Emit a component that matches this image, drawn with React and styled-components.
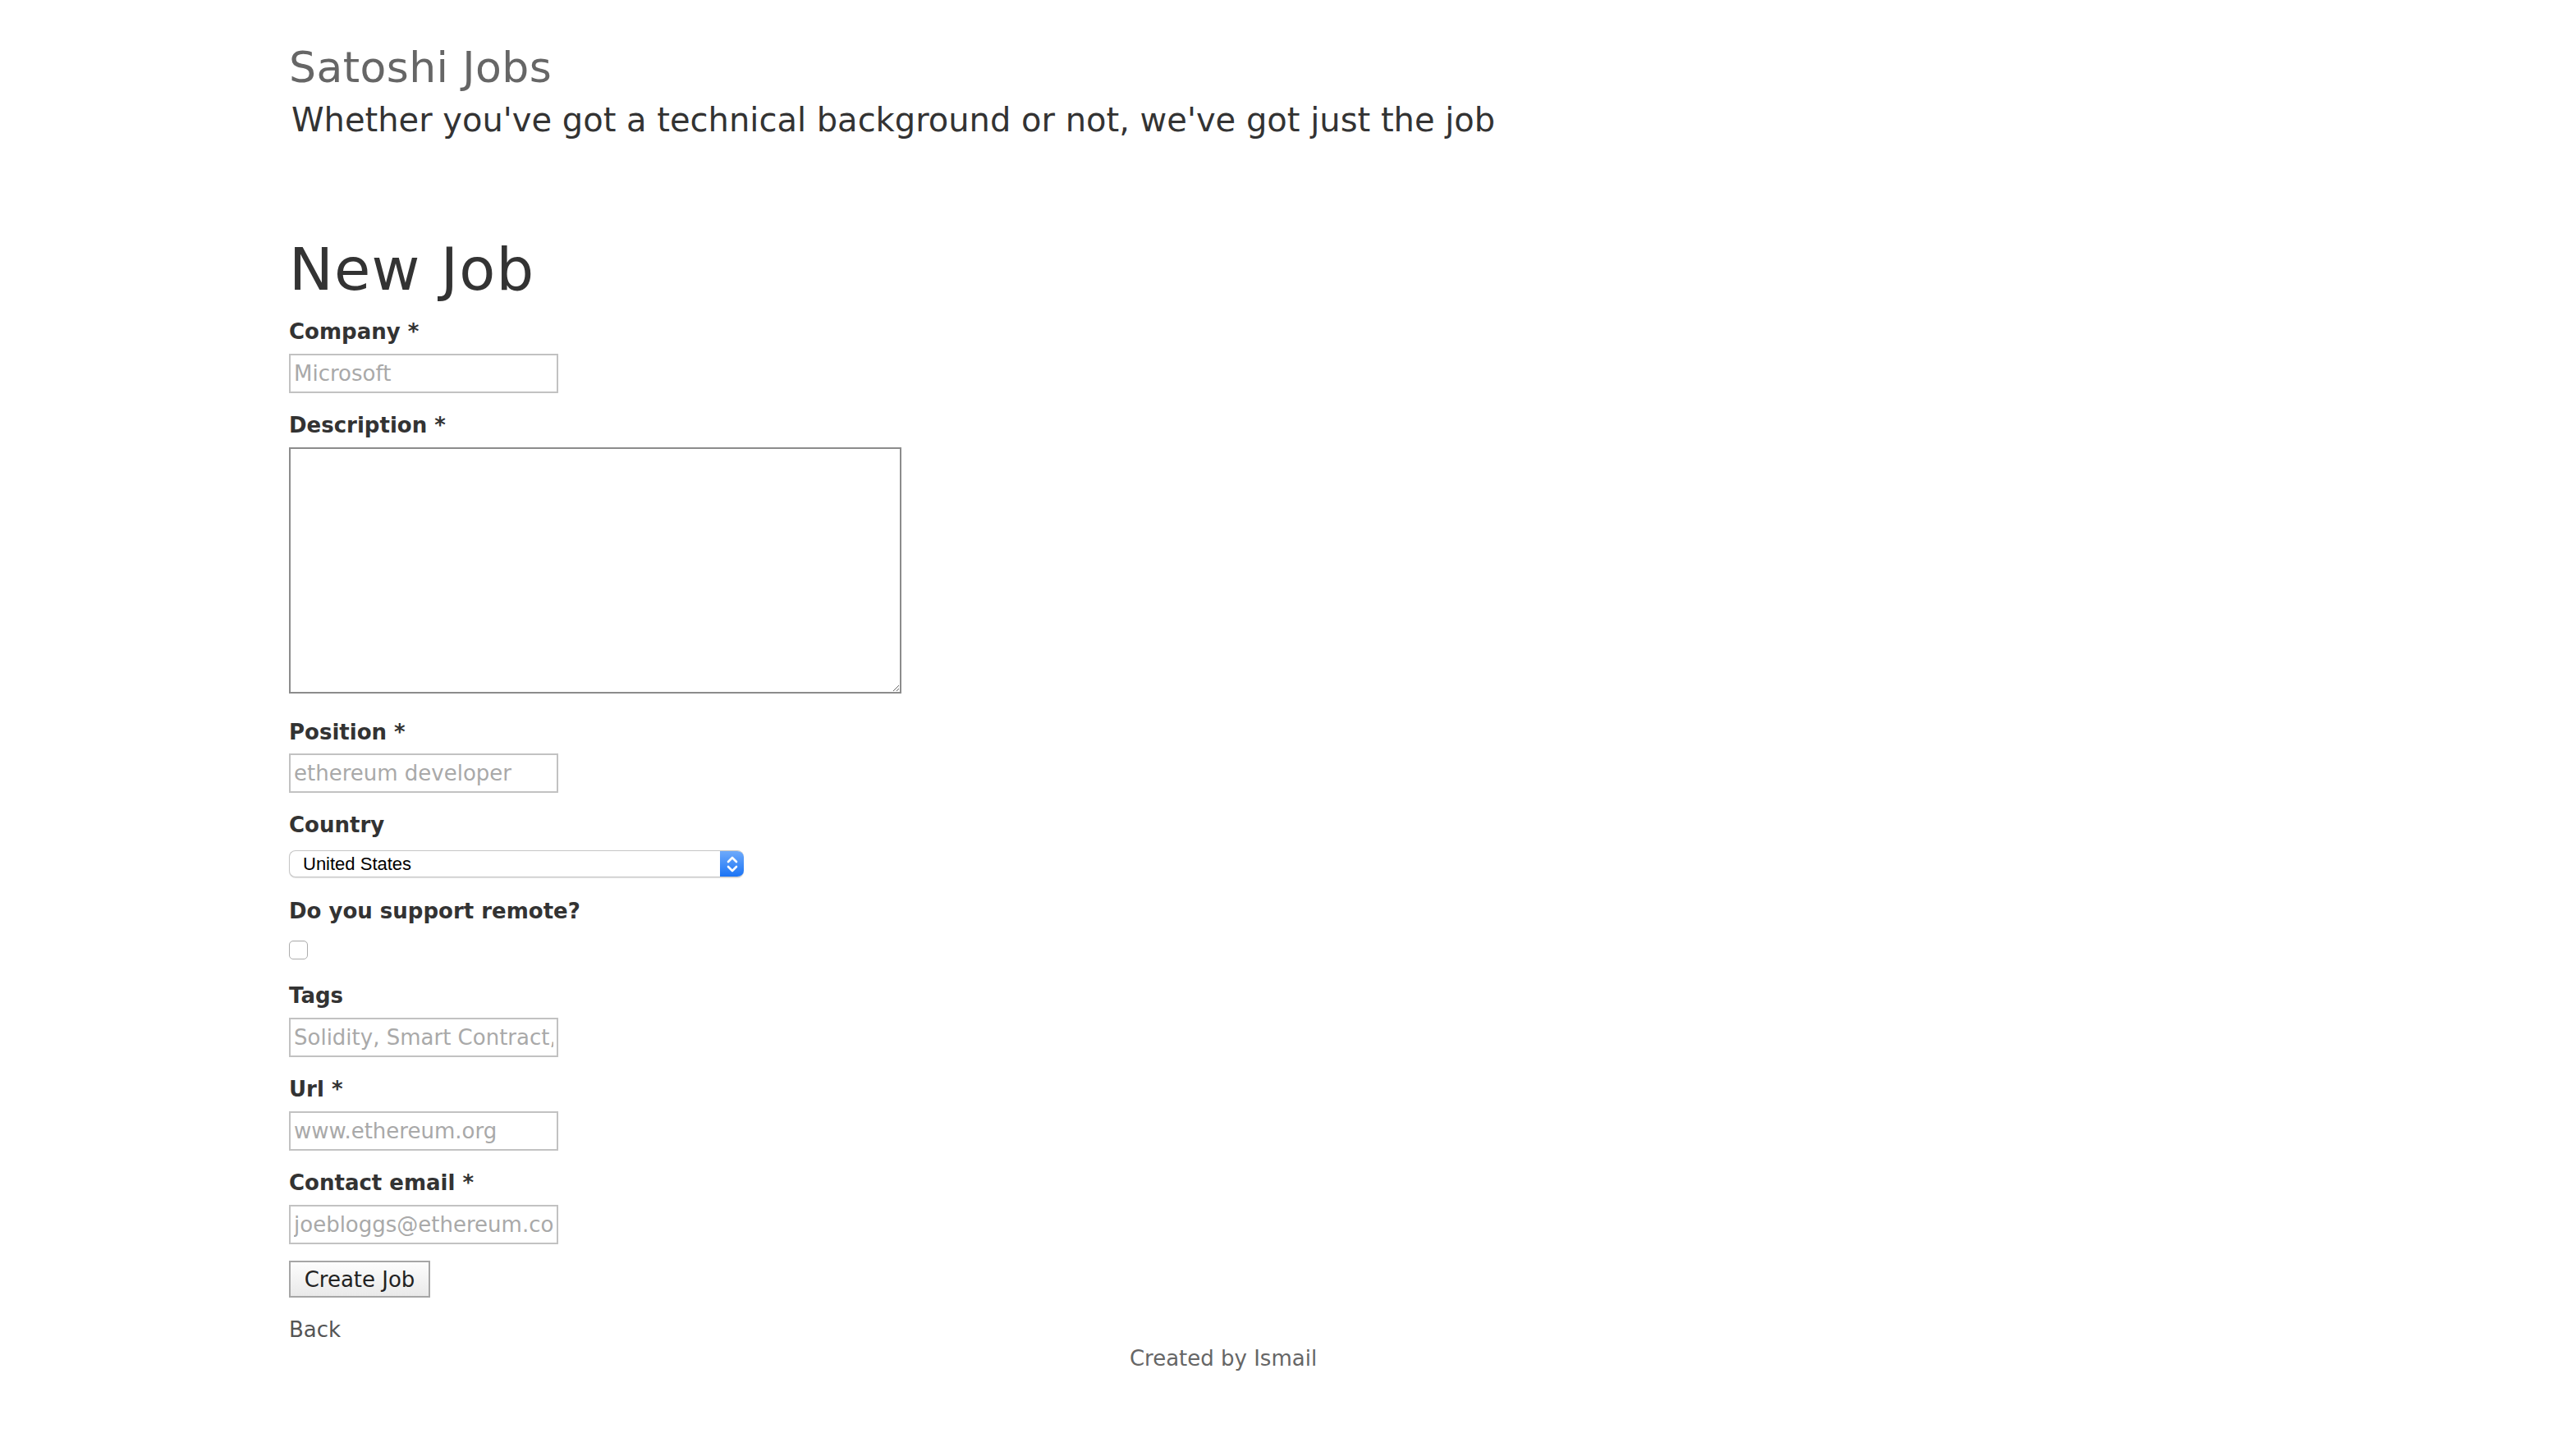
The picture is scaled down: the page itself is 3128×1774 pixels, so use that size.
import React from 'react'
import styled, { createGlobalStyle } from 'styled-components'

const GlobalStyle = createGlobalStyle`
  html, body {
    margin: 0;
    padding: 0;
    background: #fff;
  }
  body {
    font-family: "DejaVu Sans", Verdana, sans-serif;
    color: #333;
  }
  * { box-sizing: border-box; }
`

const Page = styled.div`
  padding: 52px 0 80px 352px;
`

const Brand = styled.h2`
  margin: 0;
  font-size: 52px;
  line-height: 60px;
  font-weight: normal;
  letter-spacing: 0.4px;
  color: #666;
`

const Tagline = styled.p`
  margin: 12px 0 0 3px;
  font-size: 40px;
  line-height: 44px;
  color: #333;
`

const Heading = styled.h1`
  margin: 120px 0 18px;
  font-size: 72px;
  line-height: 80px;
  font-weight: normal;
  letter-spacing: 1.2px;
  color: #333;
`

const Field = styled.div`
  margin-bottom: ${p => p.$after}px;
`

const Label = styled.label`
  display: block;
  font-size: 26px;
  line-height: 36px;
  font-weight: bold;
  color: #333;
  margin-bottom: ${p => p.$gap || 9}px;
`

const TextInput = styled.input`
  display: block;
  width: 328px;
  height: 48px;
  border: 2px solid #c2c2c2;
  padding: 0 4px;
  font-family: "DejaVu Sans", Verdana, sans-serif;
  font-size: 26px;
  color: #333;
  background: #fff;
  outline: none;
  &::placeholder { color: #a9a9a9; }
`

const TextArea = styled.textarea`
  display: block;
  width: 746px;
  height: 300px;
  border: 2px solid #8c8c8c;
  padding: 4px;
  font-family: "DejaVu Sans", Verdana, sans-serif;
  font-size: 26px;
  background: #fff;
  outline: none;
`

const SelectBox = styled.div`
  display: flex;
  align-items: stretch;
  width: 554px;
  height: 33px;
  border: 1px solid #c6c6c6;
  border-right: none;
  border-radius: 8px;
  background: #fff;
  box-shadow: 0 1px 1px rgba(0, 0, 0, 0.12);
  overflow: hidden;
`

const SelectValue = styled.span`
  flex: 1;
  padding-left: 16px;
  font-family: "Liberation Sans", Arial, sans-serif;
  font-size: 22px;
  line-height: 31px;
  color: #000;
`

const SelectArrow = styled.span`
  display: flex;
  align-items: center;
  justify-content: center;
  width: 29px;
  background: linear-gradient(#6eaafb, #1b74f5);
`

const Check = styled.input`
  appearance: none;
  display: block;
  margin: 0;
  width: 23px;
  height: 23px;
  border: 1px solid #adadad;
  border-radius: 5px;
  background: #fff;
  box-shadow: inset 0 1px 1px rgba(0, 0, 0, 0.05);
`

const Submit = styled.button`
  display: block;
  width: 172px;
  height: 45px;
  margin-top: 20px;
  padding: 0;
  border: 2px solid #a6a6a6;
  background: linear-gradient(#fdfdfd, #e9e9e9);
  font-family: "DejaVu Sans", Verdana, sans-serif;
  font-size: 26px;
  color: #222;
`

const BackLink = styled.a`
  display: block;
  margin-top: 21px;
  font-size: 26px;
  line-height: 36px;
  color: #555;
  text-decoration: none;
`

const Footer = styled.footer`
  width: 2276px;
  margin-top: -1px;
  text-align: center;
  font-size: 26px;
  line-height: 36px;
  color: #666;
`

const Chevrons = () => (
  <svg width="16" height="24" viewBox="0 0 16 24" fill="none" stroke="#fff" strokeWidth="2.6" strokeLinecap="round" strokeLinejoin="round">
    <polyline points="3,9 8,4 13,9" />
    <polyline points="3,15 8,20 13,15" />
  </svg>
)

export default function App() {
  return (
    <Page>
      <GlobalStyle />
      <Brand>Satoshi Jobs</Brand>
      <Tagline>Whether you've got a technical background or not, we've got just the job</Tagline>

      <Heading>New Job</Heading>

      <form onSubmit={e => e.preventDefault()}>
        <Field $after={21}>
          <Label>Company *</Label>
          <TextInput placeholder="Microsoft" />
        </Field>

        <Field $after={29}>
          <Label>Description *</Label>
          <TextArea />
        </Field>

        <Field $after={21}>
          <Label $gap={8}>Position *</Label>
          <TextInput placeholder="ethereum developer" />
        </Field>

        <Field $after={23}>
          <Label $gap={13}>Country</Label>
          <SelectBox>
            <SelectValue>United States</SelectValue>
            <SelectArrow><Chevrons /></SelectArrow>
          </SelectBox>
        </Field>

        <Field $after={26}>
          <Label $gap={18}>Do you support remote?</Label>
          <Check type="checkbox" />
        </Field>

        <Field $after={21}>
          <Label>Tags</Label>
          <TextInput placeholder="Solidity, Smart Contract, Truffle" />
        </Field>

        <Field $after={21}>
          <Label>Url *</Label>
          <TextInput placeholder="www.ethereum.org" />
        </Field>

        <Field $after={0}>
          <Label>Contact email *</Label>
          <TextInput placeholder="joebloggs@ethereum.com" />
        </Field>

        <Submit type="submit">Create Job</Submit>
      </form>

      <BackLink href="#">Back</BackLink>
      <Footer>Created by Ismail</Footer>
    </Page>
  )
}
